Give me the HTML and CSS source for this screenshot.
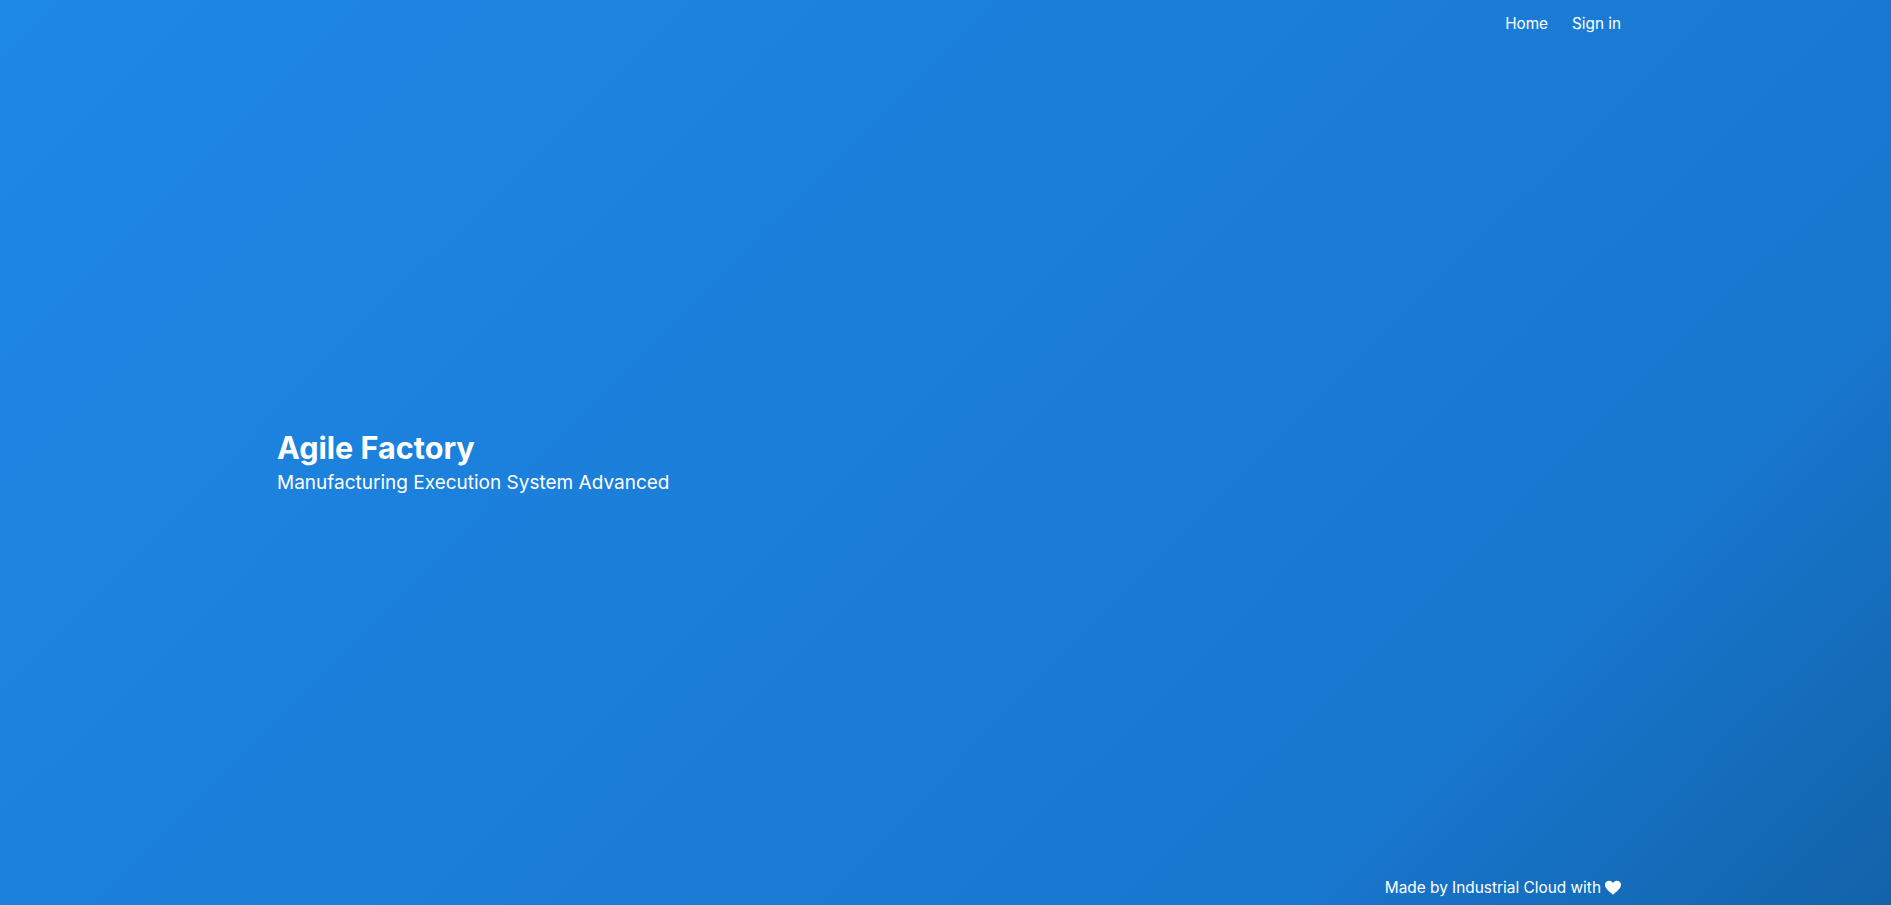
FILE: index.html
```html
<!DOCTYPE html>
<html lang="en">
<head>
<meta charset="utf-8">
<title>Agile Factory</title>
<link rel="stylesheet" href="styles.css">
</head>
<body>
<div class="page">
  <nav class="nav">
    <a class="nav-link" href="#">Home</a>
    <a class="nav-link" href="#">Sign in</a>
  </nav>
  <main class="hero">
    <h1 class="title">Agile Factory</h1>
    <p class="subtitle">Manufacturing Execution System Advanced</p>
  </main>
  <footer class="footer">
    <span>Made by Industrial Cloud with</span>
    <svg class="heart" viewBox="0 0 24 24" aria-hidden="true"><path d="M12 22 C5 16 0 12 0 7 C0 3 3 1 6.500 1 C9 1 11 2.500 12 4.500 C13 2.500 15 1 17.500 1 C21 1 24 3 24 7 C24 12 19 16 12 22Z"/></svg>
  </footer>
</div>
</body>
</html>
```
FILE: styles.css
```css
html, body { margin: 0; height: 100%; }
body {
  font-family: "Inter", "Liberation Sans", sans-serif;
  color: #fff;
}
.page {
  height: 905px;
  overflow: hidden;
  display: flex;
  flex-direction: column;
  padding: 0 270px 0 277px;
  box-sizing: border-box;
  background: linear-gradient(135deg, #1e88e5 0%, #1b7ed9 45%, #1877cf 78%, #1263a9 100%);
}
.nav {
  display: flex;
  justify-content: flex-end;
  gap: 24px;
  padding-top: 15px;
}
.nav-link {
  color: #fff;
  text-decoration: none;
  font-size: 15.3px;
  line-height: 18px;
}
.hero {
  flex: 1;
  display: flex;
  flex-direction: column;
  justify-content: center;
  padding-top: 12px;
}
.title {
  margin: 0 0 3px;
  font-size: 30.6px;
  line-height: 38px;
  font-weight: 700;
}
.subtitle {
  margin: 0;
  font-size: 19px;
  line-height: 26px;
}
.footer {
  display: flex;
  justify-content: flex-end;
  align-items: center;
  gap: 4px;
  font-size: 15.4px;
  line-height: 18px;
  padding-bottom: 8px;
}
.heart { width: 16px; height: 16px; fill: #fff; }
```
